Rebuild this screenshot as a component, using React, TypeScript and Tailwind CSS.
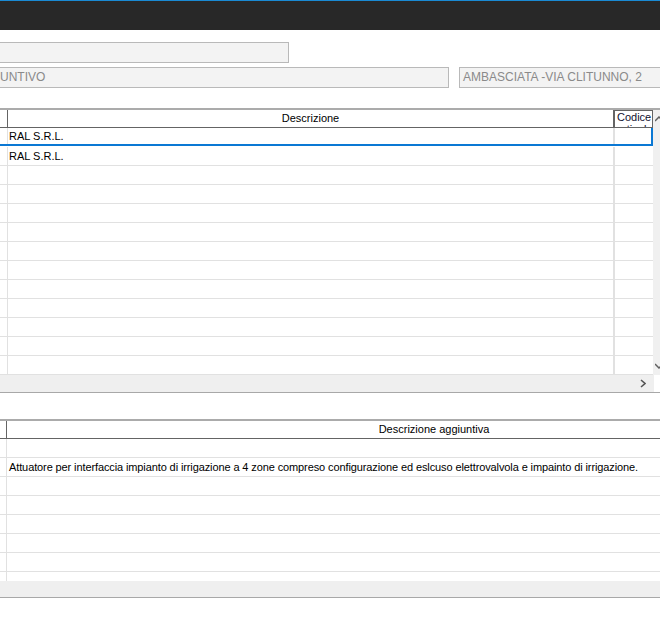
const rows1 = ["RAL S.R.L.", "RAL S.R.L.", "", "", "", "", "", "", "", "", "", "", ""];
const rows2 = [
  "",
  "Attuatore per interfaccia impianto di irrigazione a 4 zone compreso configurazione ed eslcuso elettrovalvola e impainto di irrigazione.",
  "",
  "",
  "",
  "",
  "",
];

function Field({ text, className }: { text: string; className: string }) {
  return (
    <div
      className={`h-[21px] border border-[#b9b9b9] bg-[#f3f3f3] text-[12px] leading-[19px] text-[#8a8a8a] overflow-hidden whitespace-nowrap ${className}`}
    >
      {text}
    </div>
  );
}

export default function App() {
  return (
    <div
      className="w-[660px] h-[630px] bg-white overflow-hidden text-black"
      style={{ fontFamily: '"Liberation Sans", Arial, sans-serif' }}
    >
      {/* title bar */}
      <div className="h-[30px] bg-[#282828] border-t border-[#1a8ad4]" />

      {/* header fields */}
      <div className="pt-[12px]">
        <Field text="" className="w-[289px] border-l-0" />
        <div className="flex mt-[4px]">
          <Field text="UNTIVO" className="w-[449px] border-l-0 pl-0" />
          <Field text="AMBASCIATA -VIA CLITUNNO, 2" className="ml-[10px] flex-1 border-r-0 pl-[3px]" />
        </div>
      </div>

      {/* first grid */}
      <div className="mt-[20px] border-t-2 border-[#ababab]">
        <div className="flex">
          <div className="w-[653px]">
            <div className="flex h-[18px] border-b border-[#646464] text-[11px] leading-[17px]">
              <div className="w-[8px] border-r border-[#646464]" />
              <div className="w-[605px] text-center">Descrizione</div>
              <div className="w-[40px] border-l-2 border-r border-t border-[#646464] overflow-hidden pl-[2px] leading-[12px] text-[#101030]">
                Codice
                <br />
                articolo
              </div>
            </div>
            {rows1.map((r, i) =>
              i === 0 ? (
                <div key={i} className="h-[19px]">
                  <div className="flex h-[18px] border-b-2 border-r-2 border-[#0a78d4] text-[11px] leading-[16px]">
                    <div className="w-[8px] border-r border-[#e1e1e1] shrink-0" />
                    <div className="w-[605px] pl-[1px] whitespace-nowrap shrink-0">{r}</div>
                    <div className="w-[38px] border-l-2 border-[#e1e1e1] shrink-0" />
                  </div>
                </div>
              ) : (
                <div key={i} className="flex h-[19px] border-b border-[#e1e1e1] text-[11px] leading-[18px]">
                  <div className="w-[8px] border-r border-[#e1e1e1] shrink-0" />
                  <div className="w-[605px] pl-[1px] whitespace-nowrap shrink-0">{r}</div>
                  <div className="w-[38px] border-l-2 border-[#e1e1e1] shrink-0" />
                </div>
              )
            )}
          </div>
          <div className="w-[7px] bg-[#f0f0f0] relative overflow-hidden">
            <svg className="absolute left-[2px] top-[6px]" width="8" height="6" viewBox="0 0 8 6">
              <path d="M0 5 L4 1 L8 5" stroke="#606060" strokeWidth="1.5" fill="none" />
            </svg>
            <svg className="absolute left-[2px] bottom-[6px]" width="8" height="6" viewBox="0 0 8 6">
              <path d="M0 1 L4 5 L8 1" stroke="#606060" strokeWidth="1.5" fill="none" />
            </svg>
          </div>
        </div>
        <div className="flex border-b border-[#a8a8a8]">
          <div className="w-[654px] h-[17px] bg-[#efefef] relative">
            <svg className="absolute right-[8px] top-[4px]" width="6" height="9" viewBox="0 0 6 9">
              <path d="M1 1 L5 4.5 L1 8" stroke="#555" strokeWidth="1.6" fill="none" />
            </svg>
          </div>
          <div className="flex-1" />
        </div>
      </div>

      {/* second grid */}
      <div className="mt-[26px] border-t-2 border-[#ababab]">
        <div className="flex h-[18px] border-b border-[#646464] text-[11px] leading-[16px] overflow-hidden">
          <div className="w-[7px] border-r border-[#646464] shrink-0" />
          <div className="w-[854px] text-center shrink-0">Descrizione aggiuntiva</div>
        </div>
        {rows2.map((r, i) => (
          <div key={i} className="flex h-[19px] border-b border-[#e1e1e1] text-[11px] leading-[18px]">
            <div className="w-[7px] border-r border-[#e1e1e1] shrink-0" />
            <div className="pl-[2px] whitespace-nowrap tracking-[-0.11px]">{r}</div>
          </div>
        ))}
        <div className="flex h-[9px]">
          <div className="w-[7px] border-r border-[#e1e1e1]" />
        </div>
        <div className="h-[17px] bg-[#efefef] border-b border-[#a8a8a8]" />
      </div>
    </div>
  );
}
